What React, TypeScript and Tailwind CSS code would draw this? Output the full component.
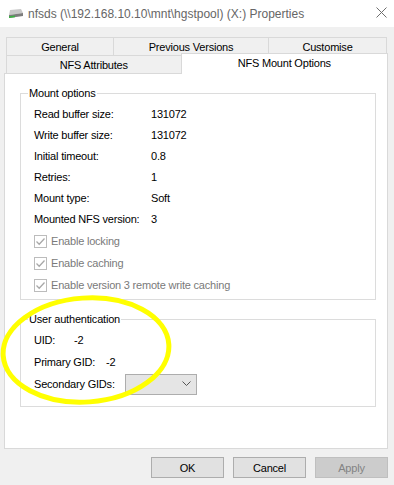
import React from "react";

const font = "font-['Liberation_Sans',Arial,sans-serif]";

function Row({ label, value, w = "w-[117px]" }: { label: string; value: string; w?: string }) {
  return (
    <div className="flex h-[21px] items-center">
      <span className={w}>{label}</span>
      <span>{value}</span>
    </div>
  );
}

function Check({ label }: { label: string }) {
  return (
    <div className="flex h-[22px] items-center text-[#7a7a7a]">
      <span className="mr-[4px] flex h-[13px] w-[13px] items-center justify-center border border-[#bcbcbc] bg-white">
        <svg width="11" height="11" viewBox="0 0 11 11">
          <path d="M1.5 5.5 L4.2 8.2 L9.5 2.5" fill="none" stroke="#a8a8a8" strokeWidth="1.3" />
        </svg>
      </span>
      <span>{label}</span>
    </div>
  );
}

export default function App() {
  return (
    <div
      className={`${font} relative h-[485px] w-[394px] overflow-hidden bg-[#f0f0f0] text-[11px] leading-[14px] tracking-[-0.2px] text-black`}
    >
      {/* title bar */}
      <div className="flex h-[27px] items-center bg-white">
        <svg className="ml-[7px] mr-[4px]" width="17" height="12" viewBox="0 0 17 12">
          <path d="M3 2 L14 1 L16 5 L2 7 Z" fill="#c8c8c8" />
          <path d="M2 7 L16 5 L16 8 L2 10 Z" fill="#7d7d7d" />
          <path d="M2 8.2 L8 7.4 L8 9.2 L2 10 Z" fill="#3cb043" />
        </svg>
        <span className="text-[12px] tracking-normal text-[#666]">
          nfsds (\\192.168.10.10\mnt\hgstpool) (X:) Properties
        </span>
        <svg className="absolute left-[376px] top-[7px]" width="11" height="11" viewBox="0 0 11 11">
          <path d="M0.5 0.5 L10.5 10.5 M10.5 0.5 L0.5 10.5" stroke="#6e6e6e" strokeWidth="1" />
        </svg>
      </div>

      <div className="pl-[4px] pr-[6px] pt-[10px]">
        {/* tab row 1 */}
        <div className="ml-[2px] flex h-[18px]">
          <div className="flex w-[107px] items-center justify-center border-l border-t border-[#d9d9d9]">General</div>
          <div className="flex w-[155px] items-center justify-center border-l border-t border-[#d9d9d9]">Previous Versions</div>
          <div className="flex w-[119px] items-center justify-center border-l border-r border-t border-[#d9d9d9]">Customise</div>
        </div>
        {/* tab row 2 */}
        <div className="relative z-10 ml-[2px] flex h-[18px] items-end">
          <div className="flex h-[18px] w-[175px] items-center justify-center border-l border-t border-[#d9d9d9]">NFS Attributes</div>
          <div className="relative top-[1px] flex h-[21px] w-[208px] items-center justify-center border-l border-r border-t border-[#d9d9d9] bg-white pb-[2px]">
            NFS Mount Options
          </div>
        </div>
        {/* panel */}
        <div className="h-[376px] border border-[#d9d9d9] bg-white pl-[15px] pr-[11px]">
          <fieldset className="mt-[12px] border border-[#dcdcdc] pb-[3px] pl-[13px]">
            <legend className="-ml-[6px] px-[1px]">Mount options</legend>
            <div className="mt-[3px]">
              <Row label="Read buffer size:" value="131072" />
              <Row label="Write buffer size:" value="131072" />
              <Row label="Initial timeout:" value="0.8" />
              <Row label="Retries:" value="1" />
              <Row label="Mount type:" value="Soft" />
              <Row label="Mounted NFS version:" value="3" />
            </div>
            <div className="mt-[1px]">
              <Check label="Enable locking" />
              <Check label="Enable caching" />
              <Check label="Enable version 3 remote write caching" />
            </div>
          </fieldset>

          <fieldset className="mt-[12px] border border-[#dcdcdc] pb-[11px] pl-[13px]">
            <legend className="-ml-[6px] px-[1px]">User authentication</legend>
            <div className="mt-[3px]">
              <div className="flex h-[22px] items-center">
                <span className="w-[40px]">UID:</span>
                <span>-2</span>
              </div>
              <div className="flex h-[22px] items-center">
                <span className="w-[72px]">Primary GID:</span>
                <span>-2</span>
              </div>
              <div className="flex h-[22px] items-center">
                <span className="w-[91px]">Secondary GIDs:</span>
                <div className="flex h-[21px] w-[72px] items-center justify-end border border-[#adadad] bg-[#e5e5e5] pr-[5px]">
                  <svg width="9" height="6" viewBox="0 0 9 6">
                    <path d="M0.5 0.5 L4.5 4.5 L8.5 0.5" fill="none" stroke="#555" strokeWidth="1" />
                  </svg>
                </div>
              </div>
            </div>
          </fieldset>
        </div>

        {/* buttons */}
        <div className="mt-[8px] flex justify-end gap-[9px]">
          <div className="flex h-[21px] w-[73px] items-center justify-center border border-[#adadad] bg-[#e1e1e1]">OK</div>
          <div className="flex h-[21px] w-[73px] items-center justify-center border border-[#adadad] bg-[#e1e1e1]">Cancel</div>
          <div className="flex h-[21px] w-[73px] items-center justify-center border border-[#bfbfbf] bg-[#cccccc] text-[#838383]">Apply</div>
        </div>
      </div>

      {/* yellow annotation ellipse */}
      <svg className="pointer-events-none absolute left-0 top-0" width="394" height="485" viewBox="0 0 394 485">
        <ellipse cx="86" cy="350" rx="83" ry="52" fill="none" stroke="#ffff00" strokeWidth="5" transform="rotate(-4 86 350)" />
      </svg>
    </div>
  );
}
